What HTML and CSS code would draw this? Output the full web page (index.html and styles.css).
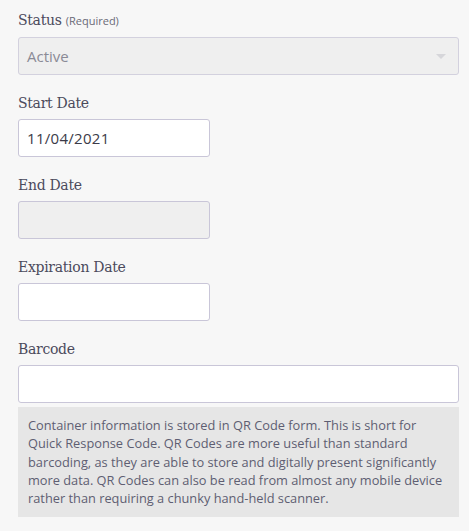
FILE: index.html
```html
<!DOCTYPE html>
<html>
<head>
<meta charset="utf-8">
<link rel="stylesheet" href="styles.css">
</head>
<body>
<form class="form">
  <div class="field">
    <label class="label">Status <span class="req">(Required)</span></label>
    <div class="select">
      <span class="select-text">Active</span>
      <span class="caret"></span>
    </div>
  </div>
  <div class="field">
    <label class="label">Start Date</label>
    <div class="input short">11/04/2021</div>
  </div>
  <div class="field">
    <label class="label">End Date</label>
    <div class="input short disabled"></div>
  </div>
  <div class="field">
    <label class="label">Expiration Date</label>
    <div class="input short"></div>
  </div>
  <div class="field last">
    <label class="label">Barcode</label>
    <div class="input"></div>
    <div class="help">Container information is stored in QR Code form. This is short for Quick Response Code. QR Codes are more useful than standard barcoding, as they are able to store and digitally present significantly more data. QR Codes can also be read from almost any mobile device rather than requiring a chunky hand-held scanner.</div>
  </div>
</form>
</body>
</html>
```
FILE: styles.css
```css
html, body {
  margin: 0;
  padding: 0;
  background: #f7f7f7;
}
.form {
  padding: 10px 0 0 18px;
  width: 441px;
  font-family: "Open Sans", "Noto Sans", sans-serif;
}
.field {
  display: flex;
  flex-direction: column;
  margin-bottom: 18px;
}
.label {
  font-family: "DejaVu Serif", "Liberation Serif", serif;
  font-size: 14px;
  line-height: 20px;
  color: #4b4a5c;
  margin-bottom: 6px;
  letter-spacing: -0.3px;
}
.req {
  font-family: "Open Sans", sans-serif;
  font-size: 11px;
  color: #6a6a78;
  letter-spacing: 0;
}
.select {
  box-sizing: border-box;
  height: 38px;
  border: 1px solid #d3d1de;
  border-radius: 3px;
  background: #efefef;
  display: flex;
  align-items: center;
  justify-content: space-between;
  padding: 0 12px 0 8px;
}
.select-text {
  font-size: 15px;
  color: #8a8a96;
}
.caret {
  width: 0;
  height: 0;
  border-left: 5px solid transparent;
  border-right: 5px solid transparent;
  border-top: 5px solid #d6d6da;
}
.input {
  box-sizing: border-box;
  height: 38px;
  border: 1px solid #c9c6d8;
  border-radius: 3px;
  background: #ffffff;
  font-size: 15px;
  letter-spacing: 0.3px;
  color: #3b3b48;
  display: flex;
  align-items: center;
  padding: 0 8px;
}
.short {
  width: 192px;
}
.disabled {
  background: #efefef;
}
.help {
  margin-top: 4px;
  background: #e6e6e6;
  padding: 9px 12px 10px 10px;
  font-size: 12.8px;
  line-height: 18.3px;
  color: #5e5e72;
}
```
